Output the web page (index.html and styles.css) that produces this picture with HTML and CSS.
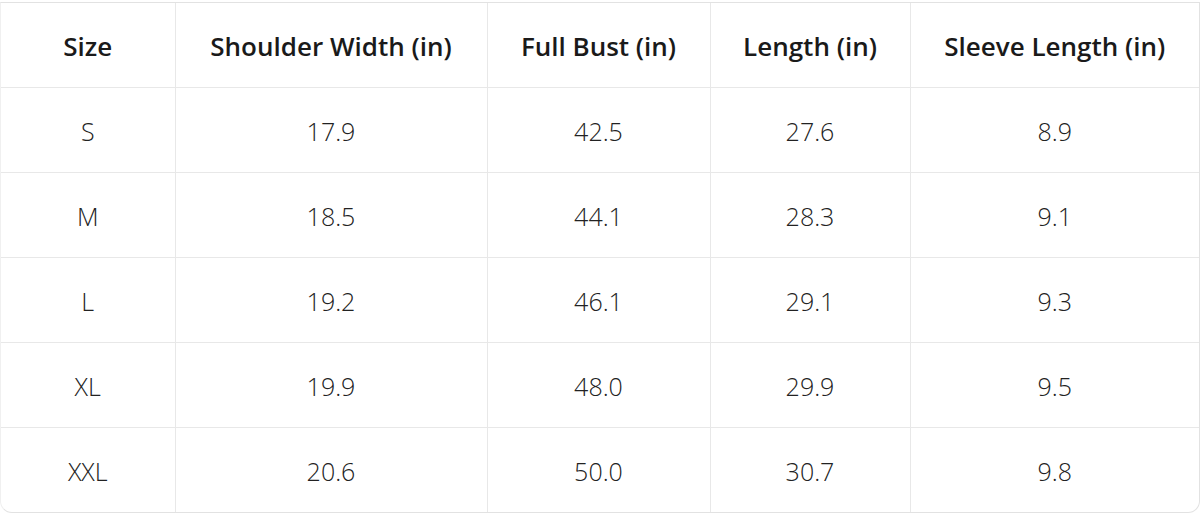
FILE: index.html
```html
<!DOCTYPE html>
<html>
<head>
<meta charset="utf-8">
<link rel="stylesheet" href="styles.css">
</head>
<body>
<div class="wrap">
<table class="sizes">
<colgroup>
<col class="c1"><col class="c2"><col class="c3"><col class="c4"><col class="c5">
</colgroup>
<thead>
<tr><th>Size</th><th>Shoulder Width (in)</th><th>Full Bust (in)</th><th>Length (in)</th><th>Sleeve Length (in)</th></tr>
</thead>
<tbody>
<tr><td>S</td><td>17.9</td><td>42.5</td><td>27.6</td><td>8.9</td></tr>
<tr><td>M</td><td>18.5</td><td>44.1</td><td>28.3</td><td>9.1</td></tr>
<tr><td>L</td><td>19.2</td><td>46.1</td><td>29.1</td><td>9.3</td></tr>
<tr><td>XL</td><td>19.9</td><td>48.0</td><td>29.9</td><td>9.5</td></tr>
<tr><td>XXL</td><td>20.6</td><td>50.0</td><td>30.7</td><td>9.8</td></tr>
</tbody>
</table>
</div>
</body>
</html>
```
FILE: styles.css
```css
html, body {
  margin: 0;
  padding: 0;
  background: #ffffff;
}
body {
  padding-top: 2px;
  font-family: "Open Sans", "Noto Sans", sans-serif;
}
.wrap {
  width: 1200px;
  box-sizing: border-box;
  border: 1px solid #e2e2e2;
  border-left-color: #f0f0f0;
  border-radius: 0 0 12px 12px;
  overflow: hidden;
}
.sizes {
  width: 100%;
  table-layout: fixed;
  border-collapse: collapse;
}
.c1 { width: 174px; }
.c2 { width: 312px; }
.c3 { width: 223px; }
.c4 { width: 200px; }
.c5 { width: auto; }
.sizes th, .sizes td {
  box-sizing: border-box;
  height: 85px;
  padding: 2px 0 0;
  text-align: center;
  vertical-align: middle;
  border-left: 1px solid #e8e8e8;
  border-top: 1px solid #e8e8e8;
}
.sizes tr > :first-child { border-left: none; }
.sizes thead th { border-top: none; height: 84px; }
.sizes th {
  font-size: 26px;
  font-weight: 600;
  color: #1a1a1a;
}
.sizes td {
  font-size: 25px;
  font-weight: 300;
  color: #222222;
}
```
